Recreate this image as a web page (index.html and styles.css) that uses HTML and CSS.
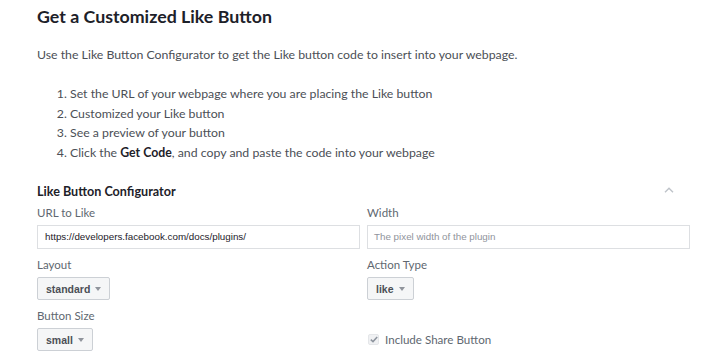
FILE: index.html
```html
<!DOCTYPE html>
<html>
<head>
<meta charset="utf-8">
<link rel="stylesheet" href="styles.css">
</head>
<body>
<div class="page">
  <h1 class="title">Get a Customized Like Button</h1>
  <p class="intro">Use the Like Button Configurator to get the Like button code to insert into your webpage.</p>
  <ol class="steps">
    <li>Set the URL of your webpage where you are placing the Like button</li>
    <li>Customized your Like button</li>
    <li>See a preview of your button</li>
    <li>Click the <b>Get Code</b>, and copy and paste the code into your webpage</li>
  </ol>
  <div class="config-head">
    <h2 class="config-title">Like Button Configurator</h2>
    <svg class="chevron" width="10" height="6" viewBox="0 0 10 6"><path d="M1 5.2 L5 1.2 L9 5.2" fill="none" stroke="#bec3c9" stroke-width="1.4"/></svg>
  </div>
  <div class="form">
    <div class="field">
      <div class="label">URL to Like</div>
      <div class="input">https://developers.facebook.com/docs/plugins/</div>
    </div>
    <div class="field">
      <div class="label">Width</div>
      <div class="input placeholder">The pixel width of the plugin</div>
    </div>
    <div class="field">
      <div class="label">Layout</div>
      <div class="select">standard<span class="caret"></span></div>
    </div>
    <div class="field">
      <div class="label">Action Type</div>
      <div class="select">like<span class="caret"></span></div>
    </div>
    <div class="field">
      <div class="label">Button Size</div>
      <div class="select">small<span class="caret"></span></div>
    </div>
    <div class="field check-field">
      <div class="check">
        <span class="box"><svg width="8" height="7" viewBox="0 0 8 7"><path d="M0.8 3.6 L3 5.6 L7.2 1" fill="none" stroke="#8d949e" stroke-width="1.5"/></svg></span>
        <span class="check-label">Include Share Button</span>
      </div>
    </div>
  </div>
</div>
</body>
</html>
```
FILE: styles.css
```css
html, body {
  margin: 0;
  padding: 0;
  background: #ffffff;
}
body {
  font-family: Lato, "Noto Sans", sans-serif;
  color: #4b4f56;
}
.page {
  width: 653px;
  padding-left: 37px;
}
.title {
  margin: 4px 0 0;
  font-size: 17.8px;
  line-height: 24px;
  font-weight: 700;
  color: #1d2129;
}
.intro {
  margin: 17px 0 0;
  font-size: 12.3px;
  line-height: 20px;
}
.steps {
  margin: 19px 0 0;
  padding-left: 33px;
  font-size: 12.3px;
  line-height: 19.5px;
}
.steps b {
  color: #1d2129;
}
.config-head {
  margin-top: 20px;
  display: flex;
  align-items: center;
  justify-content: space-between;
  height: 20px;
}
.config-title {
  margin: 0;
  font-size: 12.6px;
  line-height: 20px;
  font-weight: 700;
  color: #1d2129;
}
.chevron {
  margin-right: 16px;
  margin-top: -4px;
}
.form {
  margin-top: 2px;
  display: grid;
  grid-template-columns: 323px 323px;
  column-gap: 7px;
  row-gap: 7px;
}
.field {
  display: flex;
  flex-direction: column;
  align-items: flex-start;
}
.label {
  font-size: 11.5px;
  line-height: 18px;
  margin-bottom: 3px;
  color: #606770;
}
.input {
  box-sizing: border-box;
  width: 100%;
  height: 24px;
  border: 1px solid #dddfe2;
  padding: 0 7px;
  font-family: "Liberation Sans", Arial, sans-serif;
  font-size: 9.8px;
  line-height: 22px;
  color: #1d2129;
}
.input.placeholder {
  color: #90949c;
  padding-left: 6px;
}
.select {
  box-sizing: border-box;
  height: 23px;
  display: flex;
  align-items: center;
  padding: 0 8px;
  background: #f5f6f7;
  border: 1px solid #ccd0d5;
  border-radius: 2px;
  font-family: "Liberation Sans", Arial, sans-serif;
  font-size: 10.5px;
  font-weight: 700;
  color: #4b4f56;
}
.caret {
  margin-left: 5px;
  margin-top: 1px;
  width: 0;
  height: 0;
  border-left: 3.5px solid transparent;
  border-right: 3.5px solid transparent;
  border-top: 4px solid #90949c;
}
.check-field {
  justify-content: flex-end;
}
.check {
  display: flex;
  align-items: center;
  height: 23px;
  padding-left: 1px;
}
.box {
  box-sizing: border-box;
  width: 11px;
  height: 11px;
  border-radius: 2px;
  background: #f0f1f3;
  border: 1px solid #e4e6e9;
  display: flex;
  align-items: center;
  justify-content: center;
}
.check-label {
  margin-left: 6px;
  font-size: 11.6px;
  line-height: 18px;
  color: #606770;
}
```
